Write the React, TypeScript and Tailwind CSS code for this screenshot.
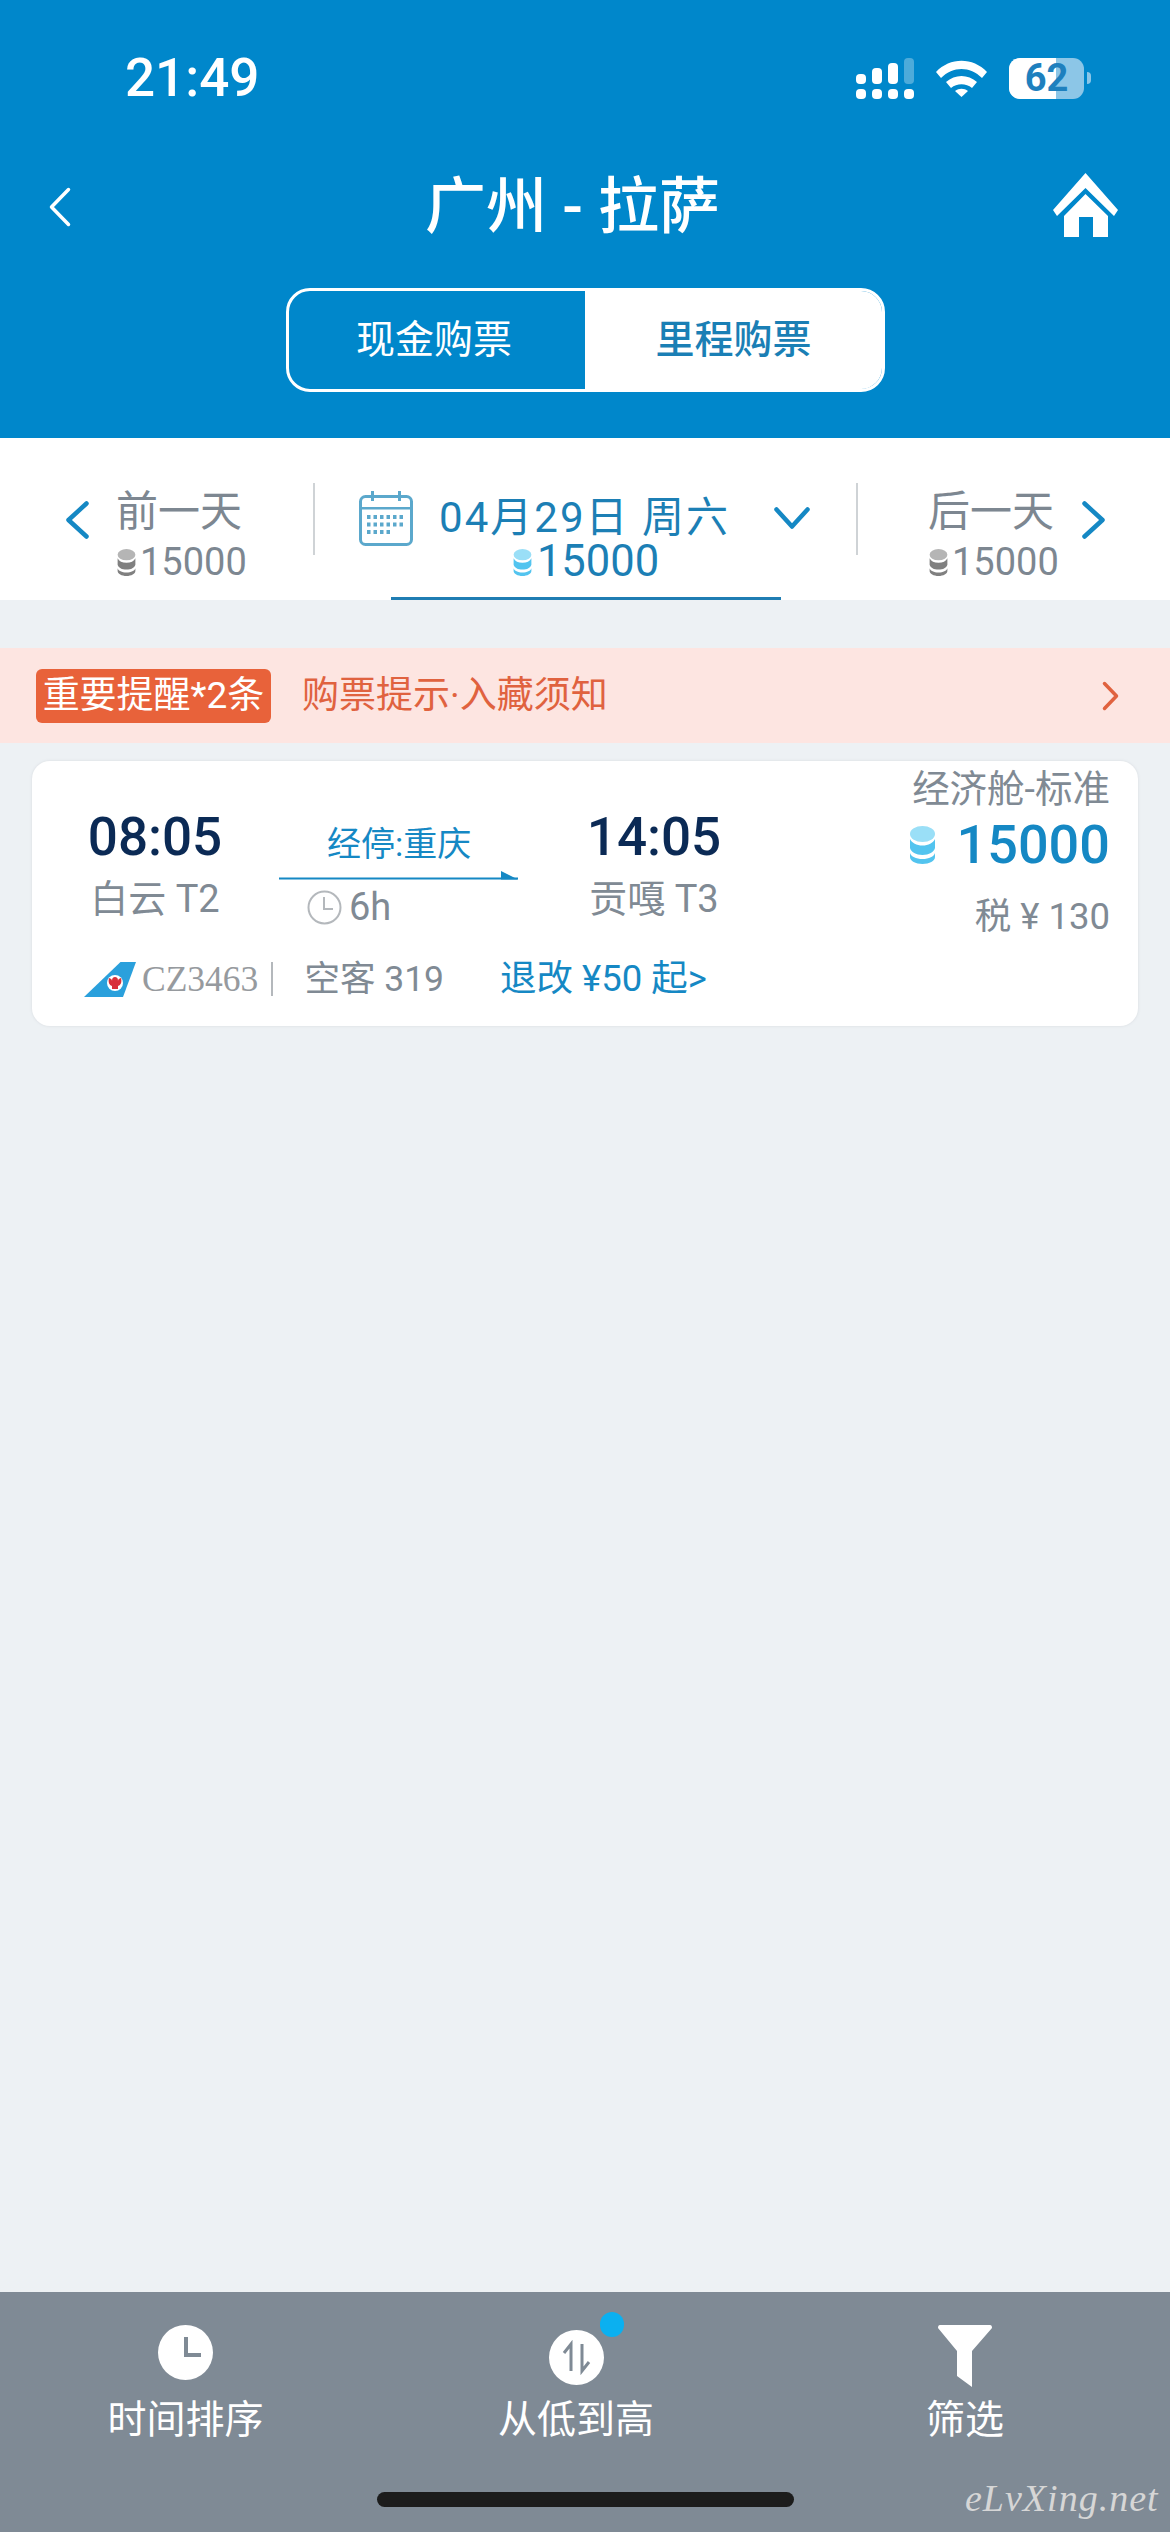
import React from "react";

function Coin({ w, h, top, body }: { w: number; h: number; top: string; body: string }) {
  return (
    <svg width={w} height={h} viewBox="0 0 25 38" className="shrink-0">
      <path d="M0 27v4c0 4 5.600 7 12.500 7S25 35 25 31v-4c-1 3.500-6 6-12.500 6S1 30.500 0 27z" fill={body} />
      <path d="M0 13v9c1 4 6 7 12.500 7S24 26 25 22v-9c-2 4-6.500 6.500-12.500 6.500S2 17 0 13z" fill={body} />
      <ellipse cx="12.500" cy="8" rx="12.500" ry="8" fill={top} />
    </svg>
  );
}

function Chevron({ dir, color, w, h, sw }: { dir: "l" | "r" | "d"; color: string; w: number; h: number; sw: number }) {
  const d =
    dir === "l"
      ? `M${w - sw} ${sw}L${sw} ${h / 2}L${w - sw} ${h - sw}`
      : dir === "r"
        ? `M${sw} ${sw}L${w - sw} ${h / 2}L${sw} ${h - sw}`
        : `M${sw} ${sw}L${w / 2} ${h - sw}L${w - sw} ${sw}`;
  return (
    <svg width={w} height={h} viewBox={`0 0 ${w} ${h}`} className="shrink-0">
      <path d={d} fill="none" stroke={color} strokeWidth={sw} strokeLinecap="round" strokeLinejoin="round" />
    </svg>
  );
}

function Calendar() {
  const dots: React.ReactNode[] = [];
  [0, 1, 2].forEach((r) => {
    for (let c = 0; c < (r === 2 ? 4 : 6); c++) {
      dots.push(<rect key={`${r}-${c}`} x={8 + c * 6.500} y={24 + r * 7.500} width="3.500" height="4" fill="#5BA8CC" />);
    }
  });
  return (
    <svg width="54" height="55" viewBox="0 0 54 55" className="shrink-0">
      <rect x="1.500" y="5.500" width="51" height="48" rx="5" fill="none" stroke="#5BA8CC" strokeWidth="3" />
      <rect x="1.500" y="16" width="51" height="2.500" fill="#5BA8CC" />
      <rect x="12" y="0" width="3" height="10" fill="#5BA8CC" />
      <rect x="39" y="0" width="3" height="10" fill="#5BA8CC" />
      {dots}
    </svg>
  );
}

function SideDay({ label, side }: { label: string; side: "l" | "r" }) {
  const col = (
    <div className="flex flex-col w-[130px]">
      <div className="text-[42px] leading-[48px] text-[#7D8791] whitespace-nowrap">{label}</div>
      <div className="flex items-center mt-[6px] h-[40px]">
        <Coin w={21} h={27} top="#B5B5B5" body="#808080" />
        <span className="text-[38px] leading-[40px] text-[#7D8791] ml-[3px]">15000</span>
      </div>
    </div>
  );
  return side === "l" ? (
    <div className="flex w-[313px] pl-[64px] pt-[50px]">
      <div className="mt-[11px] mr-[25px]">
        <Chevron dir="l" color="#1588C4" w={27} h={42} sw={4.500} />
      </div>
      {col}
    </div>
  ) : (
    <div className="flex flex-1 pl-[70px] pt-[50px]">
      {col}
      <div className="mt-[11px] ml-[22px]">
        <Chevron dir="r" color="#1588C4" w={27} h={42} sw={4.500} />
      </div>
    </div>
  );
}

function Divider() {
  return <div className="w-[2px] h-[72px] mt-[45px] bg-[#CFD3D6] shrink-0" />;
}

export default function App() {
  return (
    <div className="relative w-[1170px] h-[2532px] flex flex-col overflow-hidden bg-[#EDF1F4] [font-family:Roboto,'Noto_Sans_CJK_SC',sans-serif]">
      {/* Header */}
      <header className="h-[438px] shrink-0 bg-[#0087CB] flex flex-col text-white">
        <div className="flex items-center justify-between pl-[125px] pr-[79px] pt-[48px] h-[108px]">
          <span className="text-[53px] leading-[60px] font-medium">21:49</span>
          <div className="flex items-center">
            <svg width="58" height="41" viewBox="0 0 58 41" className="shrink-0">
              <rect x="0" y="16" width="10" height="10" rx="4" fill="#fff" />
              <rect x="16" y="10" width="10" height="16" rx="4" fill="#fff" />
              <rect x="32" y="5" width="10" height="21" rx="4" fill="#fff" />
              <rect x="48" y="0" width="10" height="26" rx="4" fill="#fff" fillOpacity="0.3" />
              <rect x="0" y="31" width="10" height="10" rx="4" fill="#fff" />
              <rect x="16" y="31" width="10" height="10" rx="4" fill="#fff" />
              <rect x="32" y="31" width="10" height="10" rx="4" fill="#fff" />
              <rect x="48" y="31" width="10" height="10" rx="4" fill="#fff" />
            </svg>
            <svg width="51" height="37" viewBox="0 0 51 37" className="ml-[22px] shrink-0">
              <path d="M0 12C14 -3 37 -3 51 12l-5 6C34 6 17 6 5 18z" fill="#fff" />
              <path d="M10 22c9-8 22-8 31 0l-5 6c-6-5-15-5-21 0z" fill="#fff" />
              <path d="M19 31c4-3 9-3 13 0l-6.500 6z" fill="#fff" />
            </svg>
            <div className="relative w-[75px] h-[41px] ml-[22px] rounded-[11px] bg-[#8CC6E7] flex items-center justify-center shrink-0">
              <div className="absolute left-0 top-0 bottom-0 w-[47px] rounded-l-[11px] bg-white" />
              <span className="relative text-[38px] leading-[41px] font-bold text-[#1E80BE]">62</span>
            </div>
            <div className="w-[4px] h-[12px] ml-[3px] rounded-r-full bg-[#8CC6E7]" />
          </div>
        </div>
        <div className="flex items-center h-[80px] mt-[59px] pl-[48px] pr-[52px]">
          <Chevron dir="l" color="#fff" w={24} h={42} sw={3.500} />
          <div className="flex-1 text-center pl-[20px] text-[61px] leading-[80px] font-medium whitespace-pre">广州 - 拉萨</div>
          <svg width="65" height="64" viewBox="0 0 65 64" className="shrink-0 mt-[-4px]">
            <path d="M32.500 0L65 37l-4 6L32.500 15 4 43l-4-6z" fill="#fff" />
            <path d="M32.500 21L55 43v21H40V44H26v20H11V43z" fill="#fff" />
          </svg>
        </div>
        <div className="flex w-[599px] h-[104px] mt-[41px] ml-[286px] rounded-[24px] border-[3px] border-white overflow-hidden">
          <div className="w-[296px] flex items-center justify-center pr-[6px] text-[39px] text-white">现金购票</div>
          <div className="flex-1 flex items-center justify-center bg-white text-[39px] font-medium text-[#1A7FB5]">里程购票</div>
        </div>
      </header>

      {/* Date bar */}
      <div className="flex h-[162px] shrink-0 bg-white">
        <SideDay label="前一天" side="l" />
        <Divider />
        <div className="w-[541px] flex flex-col items-center shrink-0">
          <div className="flex items-center mt-[52px] h-[56px]">
            <Calendar />
            <span className="ml-[26px] text-[42px] leading-[48px] tracking-[2px] text-[#1C7FB5] whitespace-pre">04月29日 周六</span>
            <div className="ml-[42px]">
              <Chevron dir="d" color="#1588C4" w={40} h={26} sw={4.500} />
            </div>
          </div>
          <div className="flex items-center h-[40px] mt-[-4px]">
            <Coin w={21} h={27} top="#9ADFF7" body="#53C4EF" />
            <span className="ml-[4px] text-[43.500px] leading-[40px] text-[#1C7FB5]">15000</span>
          </div>
          <div className="w-[390px] h-[3px] mt-auto bg-[#1F7DB3]" />
        </div>
        <Divider />
        <SideDay label="后一天" side="r" />
      </div>

      {/* Notice */}
      <div className="flex items-center h-[95px] mt-[48px] shrink-0 bg-[#FDE5E1] pl-[36px] pr-[50px]">
        <div className="flex items-center justify-center w-[235px] h-[54px] rounded-[6px] bg-[#E8623A] text-white text-[37px] whitespace-nowrap">重要提醒*2条</div>
        <div className="ml-[31px] text-[37px] text-[#E0623F] whitespace-nowrap">购票提示·入藏须知</div>
        <div className="ml-auto">
          <Chevron dir="r" color="#E0623F" w={19} h={32} sw={3.500} />
        </div>
      </div>

      {/* Card */}
      <div className="flex mt-[18px] mx-[32px] h-[265px] shrink-0 rounded-[18px] bg-white shadow-[0_0_3px_rgba(120,130,140,0.18)]">
        <div className="flex flex-col w-[760px] shrink-0">
          <div className="flex pt-[46px] pl-[24px]">
            <div className="flex flex-col items-center w-[198px]">
              <div className="text-[53px] leading-[60px] font-medium text-[#0B2A55]">08:05</div>
              <div className="mt-[10px] text-[38px] leading-[44px] text-[#808A94] whitespace-pre">白云 T2</div>
            </div>
            <div className="flex flex-col w-[239px] ml-[25px]">
              <div className="pt-[15px] pl-[48px] text-[34px] leading-[44px] text-[#1588C4] whitespace-nowrap">经停:重庆</div>
              <svg width="239" height="9" viewBox="0 0 239 9" className="mt-[5px]">
                <rect x="0" y="6.500" width="239" height="2" fill="#1588C4" />
                <path d="M222 0l17 8.500h-17z" fill="#1588C4" />
              </svg>
              <div className="flex items-center mt-[8px] pl-[28px]">
                <svg width="35" height="35" viewBox="0 0 35 35" className="shrink-0">
                  <circle cx="17.500" cy="17.500" r="16" fill="none" stroke="#B4B8BC" strokeWidth="2" />
                  <path d="M17 7v12h9" fill="none" stroke="#B4B8BC" strokeWidth="2" />
                </svg>
                <span className="ml-[7px] text-[38px] leading-[38px] text-[#808A94]">6h</span>
              </div>
            </div>
            <div className="flex flex-col items-center w-[198px] ml-[37px]">
              <div className="text-[53px] leading-[60px] font-medium text-[#0B2A55]">14:05</div>
              <div className="mt-[10px] text-[38px] leading-[44px] text-[#808A94] whitespace-pre">贡嘎 T3</div>
            </div>
          </div>
          <div className="flex items-center h-[44px] mt-[31px] pl-[52px]">
            <svg width="52" height="35" viewBox="0 0 52 35" className="shrink-0">
              <path d="M36.500 0H52L39 35H0z" fill="#2AA0DC" />
              <circle cx="31" cy="21" r="8" fill="#fff" />
              <path d="M25 16c2 1 3 1 3 3 0-3 1-4 3-4s3 1 3 4c0-2 1-2 3-3 1 4 0 7-3 8v3h-6v-3c-3-1-4-4-3-8z" fill="#D8303A" />
            </svg>
            <span className="ml-[6px] [font-family:'Liberation_Serif',serif] text-[35.500px] leading-[44px] text-[#969A9E]">CZ3463</span>
            <div className="w-[2px] h-[34px] ml-[13px] bg-[#B4B8BC]" />
            <span className="ml-[31px] text-[35.500px] leading-[44px] text-[#808A94] whitespace-pre">空客 319</span>
            <span className="ml-[56px] text-[36.500px] leading-[44px] text-[#1588C4] whitespace-pre">退改 ¥50 起&gt;</span>
          </div>
        </div>
        <div className="flex-1 flex flex-col items-end pr-[28px] pt-[6px]">
          <div className="text-[37.500px] leading-[44px] text-[#808A94] whitespace-nowrap">经济舱-标准</div>
          <div className="flex items-center mt-[4px] h-[60px]">
            <Coin w={25} h={38} top="#9ADFF7" body="#53C4EF" />
            <span className="ml-[22px] text-[54px] leading-[60px] font-medium text-[#1588C4]">15000</span>
          </div>
          <div className="mt-[20px] text-[36.500px] leading-[44px] text-[#808A94] whitespace-pre">税 ¥ 130</div>
        </div>
      </div>

      {/* Bottom bar */}
      <footer className="mt-auto h-[240px] shrink-0 bg-[#7F8A95] flex flex-col text-white">
        <div className="flex pt-[33px]">
          <div className="w-[371px] flex flex-col items-center">
            <svg width="55" height="62" viewBox="0 0 55 62">
              <circle cx="27.500" cy="27.500" r="27.500" fill="#fff" />
              <path d="M28 12v18h15" fill="none" stroke="#7F8A95" strokeWidth="4" />
            </svg>
            <div className="mt-[11px] text-[39px] leading-[44px] whitespace-nowrap">时间排序</div>
          </div>
          <div className="relative w-[410px] flex flex-col items-center">
            <svg width="55" height="62" viewBox="0 0 55 62">
              <circle cx="27.500" cy="32.500" r="27.500" fill="#fff" />
              <path d="M15 28l7-9v27M40 37l-7 9V19" fill="none" stroke="#7F8A95" strokeWidth="3" />
            </svg>
            <div className="absolute left-[229px] top-[-13px] w-[24px] h-[25px] rounded-full bg-[#0BB0F0]" />
            <div className="mt-[11px] text-[39px] leading-[44px] whitespace-nowrap">从低到高</div>
          </div>
          <div className="w-[368px] flex flex-col items-center">
            <svg width="54" height="62" viewBox="0 0 54 62">
              <path d="M2 0h50q2 0 2 3L34 26v36L19 51V26L0 3q0-3 2-3z" fill="#fff" />
            </svg>
            <div className="mt-[11px] text-[39px] leading-[44px] whitespace-nowrap">筛选</div>
          </div>
        </div>
        <div className="w-[417px] h-[15px] mt-[50px] mx-auto rounded-full bg-[#1C1C1C]" />
      </footer>

      <div className="absolute left-[965px] top-[2476px] [font-family:'Liberation_Serif',serif] italic text-[38px] leading-[44px] tracking-[1px] text-[#D6D6D6] whitespace-nowrap">eLvXing.net</div>
    </div>
  );
}
